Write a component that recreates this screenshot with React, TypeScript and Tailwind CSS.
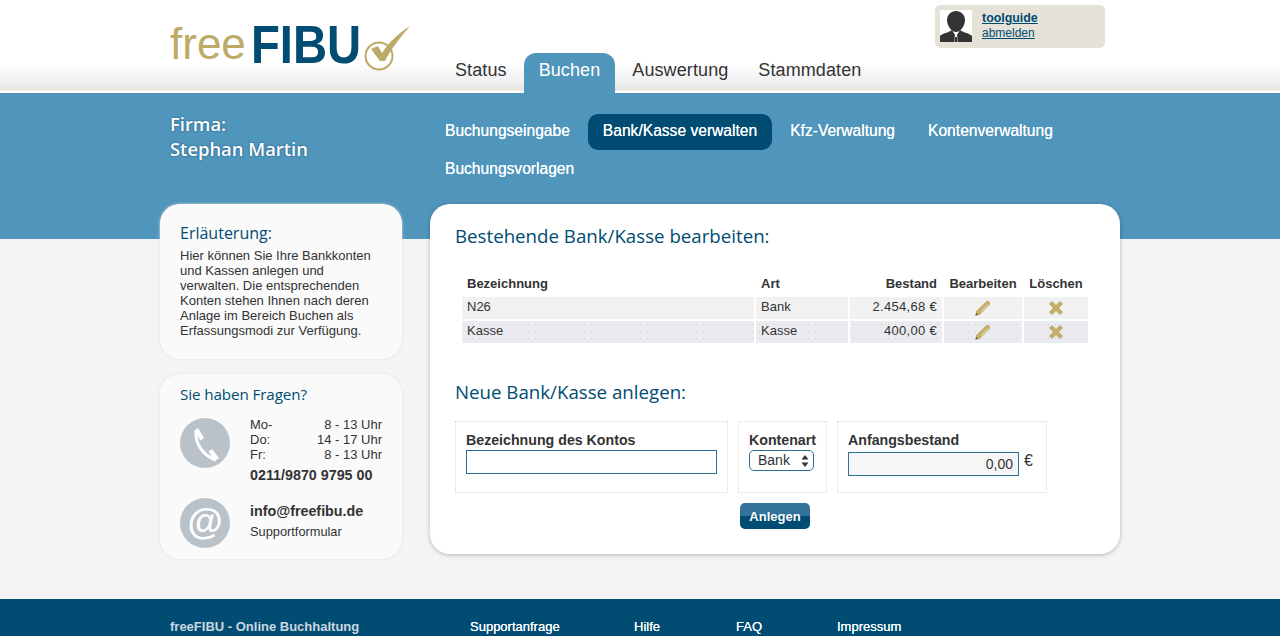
const sans = 'font-["Liberation_Sans",Arial,sans-serif]'
const heading = 'font-["Open_Sans","Noto_Sans",sans-serif]'
const dense = 'bg-[#f1f1f2]'
const sparse = 'bg-[#ebecf0] bg-[radial-gradient(#cbccd0_0.6px,transparent_0.7px)] bg-[length:7px_7px]'
const glow = '[text-shadow:0_0_0.3px_#fff]'

const tabs = ['Status', 'Buchen', 'Auswertung', 'Stammdaten']
const subnav = ['Buchungseingabe', 'Bank/Kasse verwalten', 'Kfz-Verwaltung', 'Kontenverwaltung', 'Buchungsvorlagen']
const rows = [
  { name: 'N26', type: 'Bank', amount: '2.454,68 €', bg: dense },
  { name: 'Kasse', type: 'Kasse', amount: '400,00 €', bg: sparse },
]

function Logo() {
  return (
    <div className="flex items-end pl-[10px] pt-[19px] leading-none">
      <span className="text-[44px] leading-[50px] text-[#bdaa66]">free</span>
      <span className="ml-[5px] inline-block w-[108px] origin-left scale-x-[0.875] text-[54px] font-bold leading-[50px] text-[#004c73]">
        FIBU
      </span>
      <svg viewBox="0 0 48 46" className="mb-[-2px] ml-[4px] h-[46px] w-[48px]">
        <circle cx="16" cy="31" r="13.5" fill="none" stroke="#bdaa66" strokeWidth="2" />
        <path d="M8 24 L15 21 L19 28 C26 17 36 8 47 1 C37 13 28 24 22 36 L17 36 Z" fill="#bdaa66" />
      </svg>
    </div>
  )
}

function Avatar() {
  return (
    <svg viewBox="0 0 32 32" className="h-[32px] w-[32px] bg-white">
      <path d="M16 1 C21 1 25 5 25 10 C25 15 21 22 16 22 C11 22 7 15 7 10 C7 5 11 1 16 1 Z" fill="#333" />
      <path d="M0 32 L0 26 C3 23 8 23 12 20 L15 25 L14 32 Z M32 32 L32 26 C29 23 24 23 20 20 L17 25 L18 32 Z M15 27 L17 27 L17.5 32 L14.5 32 Z" fill="#333" />
    </svg>
  )
}

function PhoneBadge() {
  return (
    <div className="h-[50px] w-[50px] rounded-full bg-[#b9c2c9]">
      <svg viewBox="0 0 50 50" className="h-[50px] w-[50px]">
        <path d="M14 13 L18 10 L24 20 L20.5 22.5 Z M28.5 33.5 L32 31 L39 40 L35 43 Z" fill="#fff" />
        <path d="M16 14 C15 25 23 38 36 42" fill="none" stroke="#fff" strokeWidth="3" />
      </svg>
    </div>
  )
}

function PencilIcon() {
  return (
    <svg viewBox="0 0 16 16" className="mx-auto h-[16px] w-[16px]">
      <path d="M4 12 L12.5 3.5" stroke="#c2ae69" strokeWidth="5" strokeLinecap="round" />
      <path d="M6 11.5 L13 4.5" stroke="#f3eedc" strokeWidth="1" />
      <path d="M0.5 15.5 L1.5 10.5 L5.5 14.5 Z" fill="#c2ae69" />
      <path d="M0.5 15.5 L1 13 L3 15 Z" fill="#4a4a3c" />
    </svg>
  )
}

function SideCard({ className, children }: { className: string; children: React.ReactNode }) {
  return (
    <div className={`rounded-[20px] bg-[#fafafa] pl-[20px] shadow-[0_0_3px_#dcdde3] ${className}`}>{children}</div>
  )
}

function FormBox({ className, label, children }: { className: string; label: string; children: React.ReactNode }) {
  return (
    <div className={`h-[72px] border border-dotted border-[#dcd9cc] pl-[10px] pt-[10px] ${className}`}>
      <div className="whitespace-nowrap text-[14.2px] font-bold leading-[16px] text-[#333]">{label}</div>
      {children}
    </div>
  )
}

export default function App() {
  return (
    <div className={`h-[636px] w-[1280px] overflow-hidden bg-[#f4f4f4] text-[#333] ${sans}`}>
      <header className="relative h-[93px] bg-[linear-gradient(#fff_0,#fff_62px,#eeeef0_84px,#e6e3da_90px,#fff_91px)]">
        <div className="mx-auto flex h-full w-[960px]">
          <div className="w-[280px]">
            <Logo />
          </div>
          <nav className="flex items-end self-end">
            {tabs.map((tab) => (
              <a
                key={tab}
                className={`flex h-[40px] items-center rounded-t-[12px] px-[15px] pb-[6px] text-[18px] tracking-[0.1px] ${
                  tab === 'Buchen' ? 'mx-[2px] bg-[#5095bb] text-white' : 'text-[#333]'
                }`}
              >
                {tab}
              </a>
            ))}
          </nav>
          <div className="absolute left-[935px] top-[5px] flex h-[43px] w-[170px] gap-[10px] rounded-[5px] bg-[#e6e2d8] pl-[5px] pt-[5px]">
            <Avatar />
            <div className="pt-[1px] text-[12px] leading-[15px] text-[#004c73] underline">
              <div className="text-[12.4px] font-bold">toolguide</div>
              <div>abmelden</div>
            </div>
          </div>
        </div>
      </header>

      <section className="h-[146px] bg-[#5095bb]">
        <div className="mx-auto flex w-[960px]">
          <div
            className={`w-[270px] pl-[10px] pt-[18px] text-[18.4px] font-semibold leading-[25px] text-white [text-shadow:0_0_2px_rgba(0,50,90,0.7)] ${heading}`}
          >
            Firma:
            <br />
            Stephan Martin
          </div>
          <div className="flex w-[680px] flex-wrap content-start gap-x-[3px] gap-y-[2px] pt-[21px]">
            {subnav.map((item) => (
              <a
                key={item}
                className={`flex h-[36px] items-center rounded-[10px] px-[15px] pb-[2px] text-[15.6px] text-white ${glow} ${
                  item === 'Bank/Kasse verwalten' ? 'bg-[#004c73]' : ''
                }`}
              >
                {item}
              </a>
            ))}
          </div>
        </div>
      </section>

      <main className="mx-auto -mt-[35px] flex h-[395px] w-[960px] gap-[28px]">
        <aside className="flex w-[242px] flex-col gap-[15px]">
          <SideCard className="h-[155px] pt-[17px]">
            <h3 className={`text-[16px] leading-[24px] text-[#004c73] ${heading}`}>Erläuterung:</h3>
            <p className="mt-[3px] text-[13px] leading-[15px] text-[#333]">
              Hier können Sie Ihre Bankkonten
              <br />
              und Kassen anlegen und
              <br />
              verwalten. Die entsprechenden
              <br />
              Konten stehen Ihnen nach deren
              <br />
              Anlage im Bereich Buchen als
              <br />
              Erfassungsmodi zur Verfügung.
            </p>
          </SideCard>
          <SideCard className="h-[185px] pt-[8px]">
            <h3 className={`text-[15.2px] leading-[24px] tracking-[-0.1px] text-[#004c73] ${heading}`}>Sie haben Fragen?</h3>
            <div className="mt-[12px] flex gap-[20px]">
              <PhoneBadge />
              <div className="-mt-[1px] w-[132px]">
                <div className="grid grid-cols-[auto_1fr] text-[13px] leading-[15px]">
                  <span>Mo-</span>
                  <span className="text-right">8 - 13 Uhr</span>
                  <span>Do:</span>
                  <span className="text-right">14 - 17 Uhr</span>
                  <span>Fr:</span>
                  <span className="text-right">8 - 13 Uhr</span>
                </div>
                <div className="mt-[5px] whitespace-nowrap text-[14.3px] font-bold leading-[16px]">0211/9870 9795 00</div>
              </div>
            </div>
            <div className="mt-[15px] flex gap-[20px]">
              <div className="flex h-[50px] w-[50px] items-center justify-center rounded-full bg-[#b9c2c9] pb-[3px] text-[36px] font-bold leading-none text-white">
                @
              </div>
              <div className="pt-[4px]">
                <div className="text-[14.3px] font-bold leading-[18px]">info@freefibu.de</div>
                <div className="mt-[4px] text-[12.8px] leading-[16px]">Supportformular</div>
              </div>
            </div>
          </SideCard>
        </aside>

        <div className="h-[350px] w-[690px] rounded-[20px] bg-white px-[25px] pt-[18px] shadow-[0_1px_4px_rgba(0,0,0,0.25)]">
          <h2 className={`text-[18.7px] leading-[28px] text-[#004c73] ${heading}`}>Bestehende Bank/Kasse bearbeiten:</h2>

          <table className="ml-[5px] mt-[19px] w-[630px] table-fixed border-separate border-spacing-[2px] text-[13px] leading-[15px]">
            <colgroup>
              <col className="w-[292px]" />
              <col className="w-[92px]" />
              <col className="w-[92px]" />
              <col className="w-[78px]" />
              <col className="w-[64px]" />
            </colgroup>
            <thead>
              <tr className="h-[24px] font-bold">
                <th className="pl-[5px] text-left">Bezeichnung</th>
                <th className="pl-[5px] text-left">Art</th>
                <th className="pr-[5px] text-right">Bestand</th>
                <th className="whitespace-nowrap text-center">Bearbeiten</th>
                <th className="text-center">Löschen</th>
              </tr>
            </thead>
            <tbody>
              {rows.map((row) => (
                <tr key={row.name} className="h-[22px]">
                  <td className={`pb-[4px] pl-[5px] ${row.bg}`}>{row.name}</td>
                  <td className={`pb-[4px] pl-[5px] ${row.bg}`}>{row.type}</td>
                  <td className={`pb-[4px] pr-[5px] text-right tracking-[0.3px] ${row.bg}`}>{row.amount}</td>
                  <td className={row.bg}>
                    <PencilIcon />
                  </td>
                  <td className={row.bg}>
                    <svg viewBox="0 0 16 16" className="mx-auto h-[16px] w-[16px]">
                      <path d="M2.5 2.5 L13.5 13.5 M13.5 2.5 L2.5 13.5" stroke="#c2ae69" strokeWidth="4.4" />
                    </svg>
                  </td>
                </tr>
              ))}
            </tbody>
          </table>

          <h2 className={`mt-[33px] text-[18.7px] leading-[28px] text-[#004c73] ${heading}`}>Neue Bank/Kasse anlegen:</h2>

          <div className="mt-[15px] flex gap-[10px]">
            <FormBox className="w-[273px]" label="Bezeichnung des Kontos">
              <input className="mt-[2px] block h-[24px] w-[251px] border border-[#2f6f96] bg-white" />
            </FormBox>
            <FormBox className="w-[89px]" label="Kontenart">
              <div className="mt-[2px] flex h-[21px] w-[65px] items-center justify-between rounded-[5px] border border-[#2f6f96] pl-[8px] pr-[4px] text-[14px]">
                Bank
                <svg viewBox="0 0 8 12" className="h-[12px] w-[8px] fill-[#333]">
                  <path d="M4 0 L7.5 4.5 L0.5 4.5 Z M4 12 L0.5 7.5 L7.5 7.5 Z" />
                </svg>
              </div>
            </FormBox>
            <FormBox className="w-[210px]" label="Anfangsbestand">
              <div className="mt-[4px] flex items-start">
                <input
                  readOnly
                  value="0,00"
                  className="block h-[24px] w-[171px] border border-[#2f6f96] bg-[#f6f6f6] pr-[5px] text-right text-[14px]"
                />
                <span className="ml-[5px] text-[16px] leading-[18px]">€</span>
              </div>
            </FormBox>
          </div>

          <button className="ml-[285px] mt-[10px] block h-[26px] w-[70px] rounded-[5px] bg-[linear-gradient(#33729a_0,#33729a_48%,#004c73_52%)] pt-[1px] text-[13px] font-bold text-white">
            Anlegen
          </button>
        </div>
      </main>

      <footer className="h-[37px] bg-[#004c73] pt-[19px] text-[13px] leading-[18px]">
        <div className="mx-auto flex w-[960px]">
          <span className="ml-[10px] w-[300px] font-bold text-[#c9d7e0]">freeFIBU - Online Buchhaltung</span>
          <a className={`w-[164px] text-white ${glow}`}>Supportanfrage</a>
          <a className={`w-[102px] text-white ${glow}`}>Hilfe</a>
          <a className={`w-[101px] text-white ${glow}`}>FAQ</a>
          <a className={`text-white ${glow}`}>Impressum</a>
        </div>
      </footer>
    </div>
  )
}
